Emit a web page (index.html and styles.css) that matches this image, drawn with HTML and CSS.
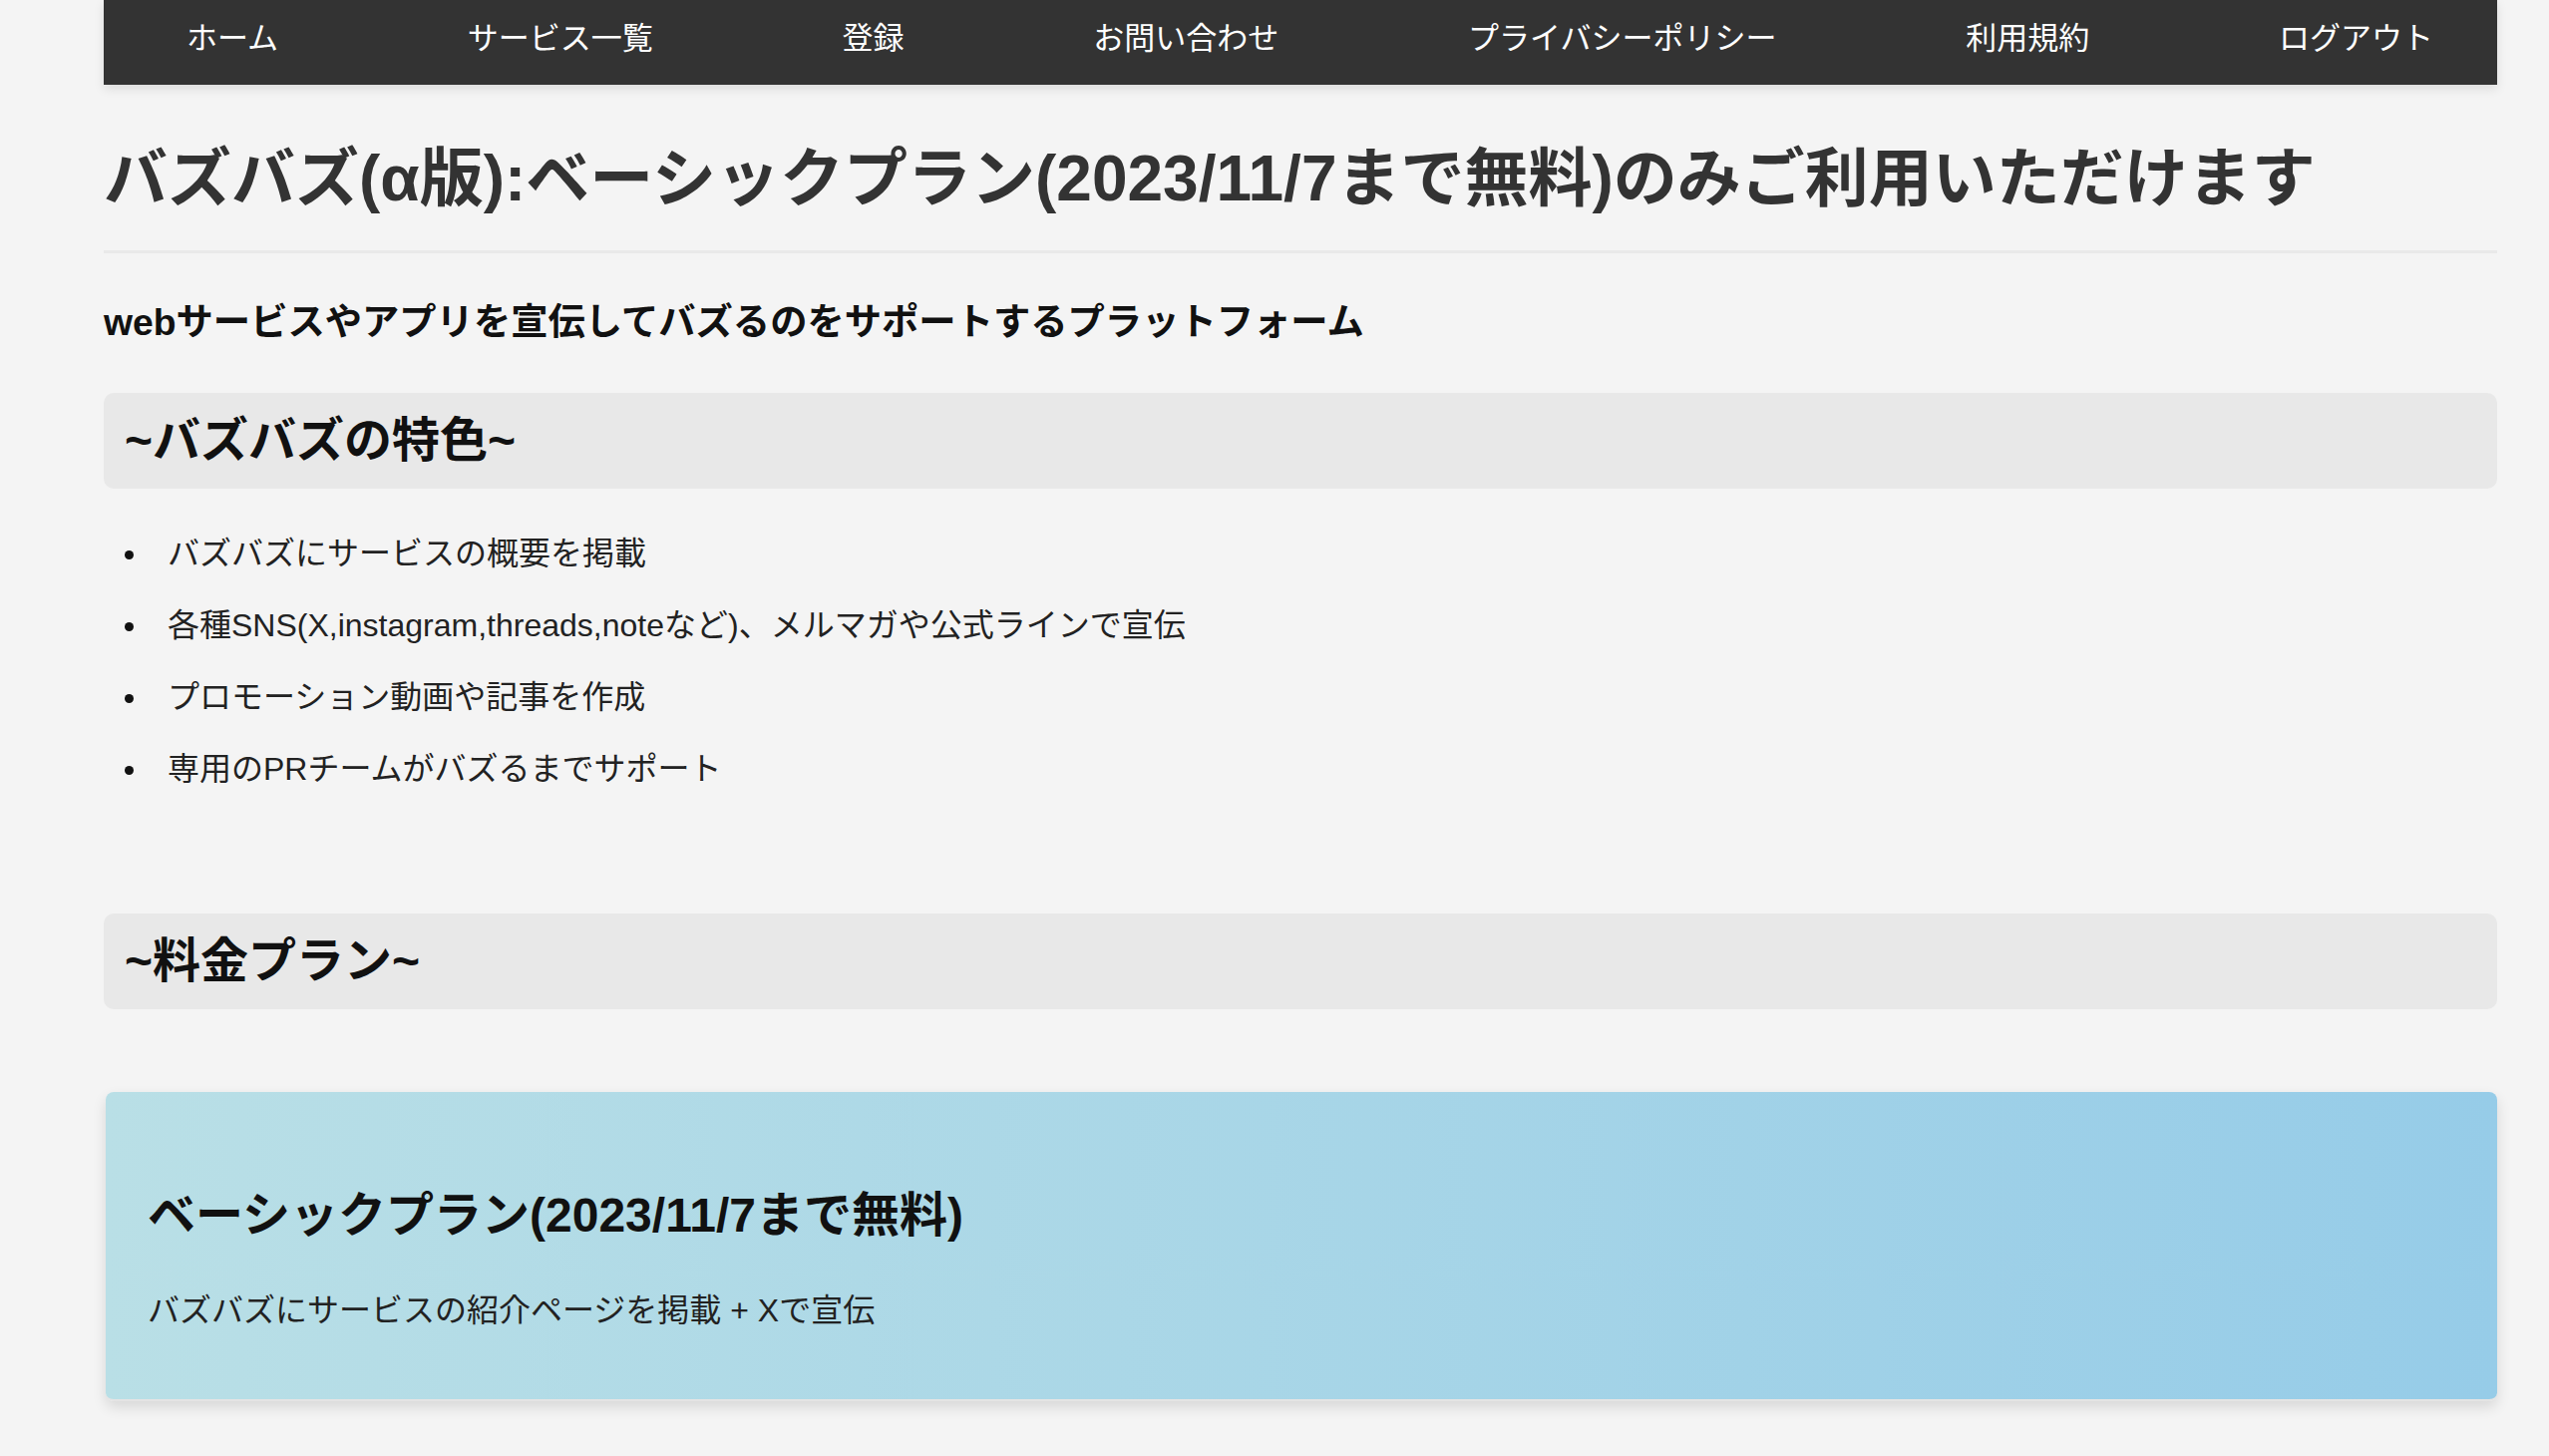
FILE: index.html
```html
<!DOCTYPE html>
<html lang="ja">
<head>
    <meta charset="UTF-8">
    <meta name="viewport" content="width=device-width, initial-scale=1.0">
    <title>バズバズ</title>
    <link rel="stylesheet" href="styles.css">
</head>
<body>
    <div class="wrapper">
        <nav class="nav">
            <a href="#">ホーム</a>
            <a href="#">サービス一覧</a>
            <a href="#">登録</a>
            <a href="#">お問い合わせ</a>
            <a href="#">プライバシーポリシー</a>
            <a href="#">利用規約</a>
            <a href="#">ログアウト</a>
        </nav>

        <h1 class="title">バズバズ(α版):ベーシックプラン(2023/11/7まで無料)のみご利用いただけます</h1>

        <p class="lead">webサービスやアプリを宣伝してバズるのをサポートするプラットフォーム</p>

        <h2 class="section-head">~バズバズの特色~</h2>
        <ul class="features">
            <li>バズバズにサービスの概要を掲載</li>
            <li>各種SNS(X,instagram,threads,noteなど)、メルマガや公式ラインで宣伝</li>
            <li>プロモーション動画や記事を作成</li>
            <li>専用のPRチームがバズるまでサポート</li>
        </ul>

        <h2 class="section-head price-head">~料金プラン~</h2>

        <div class="plan">
            <h3>ベーシックプラン(2023/11/7まで無料)</h3>
            <p>バズバズにサービスの紹介ページを掲載 + Xで宣伝</p>
        </div>
    </div>
</body>
</html>
```

FILE: styles.css
```css
body {
    margin: 0;
    background: #f4f4f4;
    font-family: "Liberation Sans", "Noto Sans CJK JP", sans-serif;
    color: #222;
}
.wrapper {
    margin: 0 52px 0 104px;
    padding-bottom: 60px;
}
.nav {
    display: flex;
    justify-content: space-between;
    background: #333;
    padding: 0 64px 0 83px;
    box-shadow: 0 4px 10px rgba(0, 0, 0, 0.1);
}
.nav a {
    color: white;
    text-decoration: none;
    font-size: 31px;
    line-height: 31px;
    padding: 23px 0 31px;
}
.title {
    margin: 57px 0 0;
    padding-bottom: 35px;
    border-bottom: 3px solid #e9e9e9;
    font-size: 64px;
    line-height: 74px;
    color: #333;
}
.lead {
    margin: 47px 0 0;
    font-size: 37.3px;
    line-height: 44px;
    font-weight: bold;
    color: #111;
}
.section-head {
    margin: 49px 0 0;
    padding: 19px 21px;
    background: #e8e8e8;
    border-radius: 10px;
    font-size: 48px;
    line-height: 58px;
    color: #111;
}
.features {
    margin: 29px 0 0;
    padding-left: 64px;
}
.features li {
    position: relative;
    list-style: none;
    font-size: 32px;
    line-height: 72px;
}
.features li::before {
    content: "";
    position: absolute;
    left: -43px;
    top: 33px;
    width: 9px;
    height: 9px;
    border-radius: 50%;
    background: #111;
}
.price-head {
    margin-top: 109px;
}
.plan {
    margin: 83px 0 0 2px;
    padding: 95px 42px 65px;
    background: linear-gradient(to right, #b9dfe6, #96cce8);
    border-bottom: 2px solid #e4e4e4;
    border-radius: 8px;
    box-shadow: 0 6px 14px rgba(0, 0, 0, 0.12);
}
.plan h3 {
    margin: 0;
    font-size: 48px;
    line-height: 58px;
    color: #111;
}
.plan p {
    margin: 42px 0 0;
    font-size: 32px;
    line-height: 48px;
}
```
